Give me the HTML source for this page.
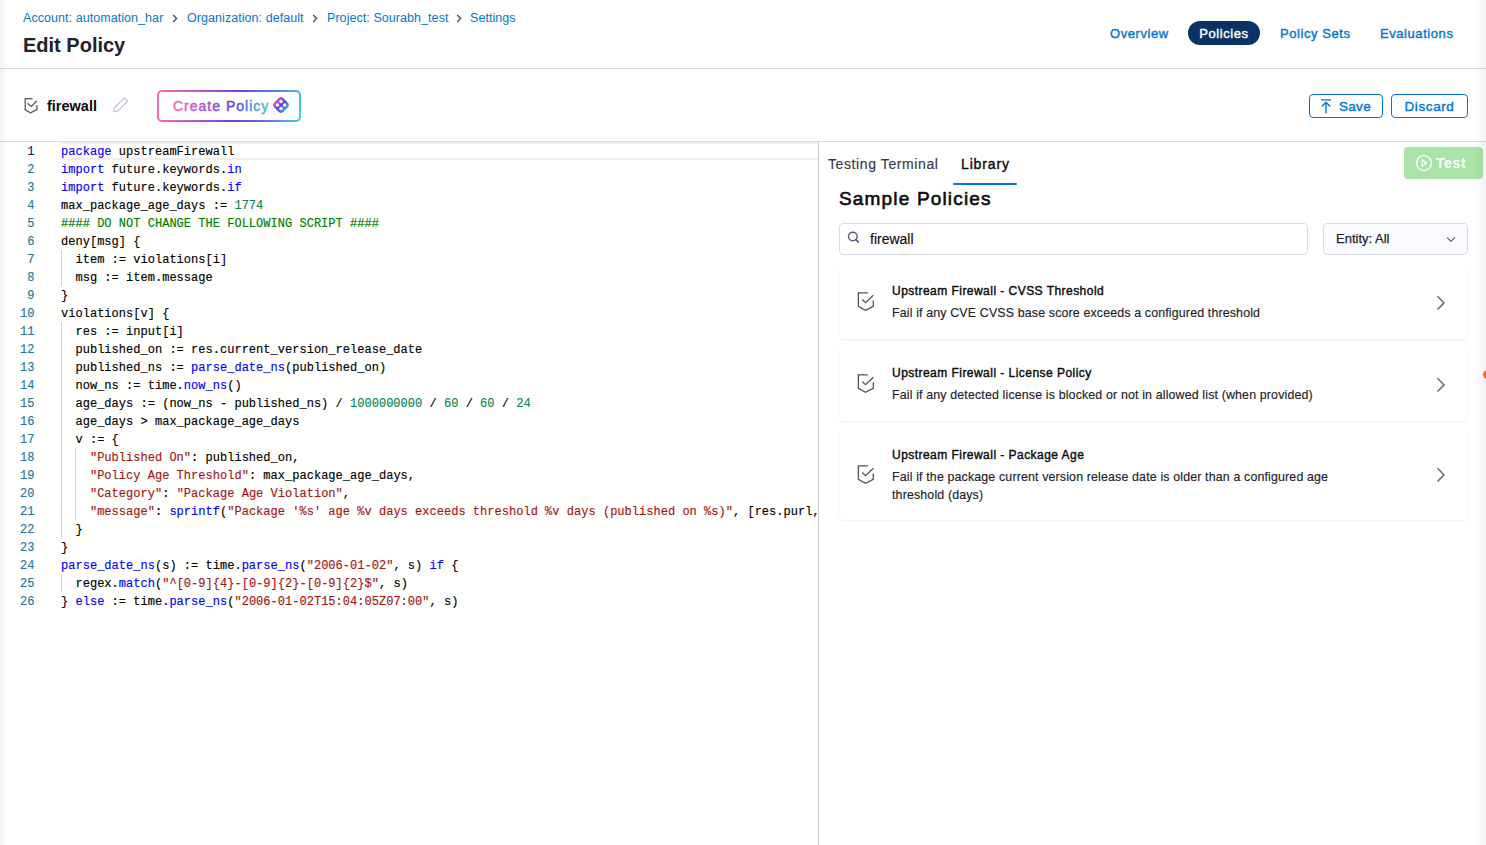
<!DOCTYPE html>
<html><head><meta charset="utf-8">
<style>
*{box-sizing:border-box;margin:0;padding:0}
html,body{width:1486px;height:845px;overflow:hidden;background:#fff}
body{position:relative;font-family:"Liberation Sans",sans-serif;color:#22222a}
.abs{position:absolute}
i{font-style:normal}
.shadowL{left:0;top:0;width:8px;height:845px;background:linear-gradient(90deg,rgba(0,0,0,0.05),rgba(0,0,0,0.025) 45%,rgba(0,0,0,0));z-index:50}
.shadowR{right:0;top:0;width:12px;height:845px;background:linear-gradient(90deg,rgba(0,0,0,0),rgba(0,0,0,0.02) 40%,rgba(0,0,0,0.055));z-index:50}
.bc{top:10px;left:0;font-size:12.5px;letter-spacing:0.06px;line-height:16px;color:#0278d5;white-space:nowrap}
.bc span{position:absolute;top:0;white-space:nowrap}
.bc svg{position:absolute;top:4px}
.title{top:33px;left:23px;font-size:20px;font-weight:700;line-height:24px;color:#22222a}
.hline1{left:0;top:68px;width:1486px;height:1px;background:#d9dae6}
.hline2{left:0;top:141px;width:1486px;height:1px;background:#d9dae6}
.nav{top:22px;font-size:13px;font-weight:400;-webkit-text-stroke:0.42px currentColor;letter-spacing:0.57px;line-height:24px;color:#0278d5;white-space:nowrap}
.pill{left:1188px;top:21px;padding-top:1px;width:72px;height:24px;border-radius:12px;background:#0a3364;color:#fff;text-align:center}
.btn{top:94px;height:24px;border:1px solid #0278d5;border-radius:4px;color:#0278d5;font-size:13px;font-weight:400;-webkit-text-stroke:0.42px currentColor;letter-spacing:0.3px;line-height:23.5px;white-space:nowrap}
.cp{left:157px;top:90px;width:144px;height:32px;border-radius:5px;background:linear-gradient(100deg,#f56ab0 0%,#b855d0 30%,#6a3ee0 55%,#5a7fe0 80%,#40d0e0 100%);padding:1.6px}
.cp div{width:100%;height:100%;background:#fff;border-radius:3px;position:relative}
.cpt{position:absolute;left:14px;top:5px;font-size:14px;font-weight:400;-webkit-text-stroke:0.45px transparent;line-height:18px;letter-spacing:0.6px;white-space:nowrap;background:linear-gradient(90deg,#ee6ab8 0%,#9b52d8 35%,#5a40de 60%,#4fa0dd 90%,#42c5e0 100%);-webkit-background-clip:text;background-clip:text;color:transparent}
/* editor */
.editor{left:0;top:142px;width:818px;height:703px;background:#fffffe;overflow:hidden}
.vsep{left:818px;top:142px;width:1px;height:703px;background:#cccccc}
.curline{position:absolute;left:61px;top:0;width:757px;height:18px;border-top:2px solid #eeeeee;border-bottom:2px solid #eeeeee}
.ln{position:absolute;left:0;height:18px;width:818px;font-family:"Liberation Mono",monospace;font-size:12px;line-height:18px;white-space:pre}
.ln b{position:absolute;top:1px;left:0;-webkit-text-stroke:0.15px currentColor;width:34.5px;text-align:right;font-weight:400;color:#237893}
.ln b.a{color:#0b216f}
.ln p{position:absolute;top:1px;left:61px;letter-spacing:0.024px;-webkit-text-stroke:0.15px currentColor;color:#000}
.k{color:#0000ff}.s{color:#a31515}.n{color:#098658}.c{color:#008000}
.guide{position:absolute;width:1px;background:#d3d3d3}
/* right panel */
.tab{top:155px;font-size:14px;line-height:18px;white-space:nowrap}
.tabline{left:953px;top:183px;width:64px;height:2px;background:#0278d5;border-radius:1px}
.testbtn{left:1404px;top:147px;width:79px;height:32px;border-radius:4px;background:#a9e3a5;color:#fff;font-size:14px;font-weight:700}
.h2{left:839px;top:188px;letter-spacing:1.17px;font-size:19px;font-weight:400;-webkit-text-stroke:0.6px currentColor;line-height:22px;color:#0b0b0d;white-space:nowrap}
.search{left:839px;top:223px;width:469px;height:32px;border:1px solid #d9dae6;border-radius:4px;background:#fff}
.dd{left:1323px;top:223px;width:145px;height:32px;border:1px solid #d9dae6;border-radius:4px;background:#fafbfe}
.card{left:840px;width:627px;background:#fff;border-radius:4px;box-shadow:0 1px 2px rgba(0,0,0,0.08),0 0 0.5px rgba(0,0,0,0.012)}
.ct{position:absolute;left:52px;letter-spacing:0.46px;font-size:12px;font-weight:400;-webkit-text-stroke:0.4px currentColor;line-height:16px;color:#0b0b0d;white-space:nowrap}
.cd{position:absolute;left:52px;letter-spacing:0.15px;margin-top:1px;-webkit-text-stroke:0.15px currentColor;font-size:12.4px;line-height:18px;color:#22222a;width:440px}
.cicon{position:absolute;left:17px}
.carrow{position:absolute;left:596px}
</style></head><body>
<div class="abs shadowL"></div>
<div class="abs shadowR"></div>

<!-- breadcrumb -->
<div class="abs bc">
<span style="left:23px">Account: automation_har</span>
<svg style="left:172px" width="6" height="9" viewBox="0 0 6 9"><path d="M1.2 1 L4.6 4.5 L1.2 8" fill="none" stroke="#4f5162" stroke-width="1.4"/></svg>
<span style="left:187px">Organization: default</span>
<svg style="left:312px" width="6" height="9" viewBox="0 0 6 9"><path d="M1.2 1 L4.6 4.5 L1.2 8" fill="none" stroke="#4f5162" stroke-width="1.4"/></svg>
<span style="left:327px">Project: Sourabh_test</span>
<svg style="left:456px" width="6" height="9" viewBox="0 0 6 9"><path d="M1.2 1 L4.6 4.5 L1.2 8" fill="none" stroke="#4f5162" stroke-width="1.4"/></svg>
<span style="left:470px">Settings</span>
</div>
<div class="abs title">Edit Policy</div>

<div class="abs nav" style="left:1110px">Overview</div>
<div class="abs nav pill">Policies</div>
<div class="abs nav" style="left:1280px">Policy Sets</div>
<div class="abs nav" style="left:1380px">Evaluations</div>

<div class="abs hline1"></div>

<!-- row 2 -->
<svg class="abs" style="left:24px;top:97px" width="14" height="18" viewBox="0 0 14 18"><path d="M8.6 1.7 H1.2 V12.9 L6.6 15.8 L12.9 12.6 V7.9 M3.6 6.3 L7.3 9.5 L12.7 4.0" fill="none" stroke="#4f5162" stroke-width="1.25"/></svg>
<div class="abs" style="left:47px;top:97px;font-size:14.5px;font-weight:700;line-height:18px;color:#0b0b0d">firewall</div>
<svg class="abs" style="left:111px;top:96px" width="18" height="19" viewBox="0 0 18 19"><g transform="rotate(45 9 9.5)"><path d="M7.6 0.8 h2.8 a0.9 0.9 0 0 1 0.9 0.9 V15.8 L9 18.2 L6.7 15.8 V1.7 a0.9 0.9 0 0 1 0.9 -0.9 Z" fill="none" stroke="#b5b6cb" stroke-width="1"/></g></svg>
<div class="abs cp"><div><svg style="position:absolute;left:0;top:0" width="140" height="29" viewBox="0 0 140 29"><defs><linearGradient id="tg" gradientUnits="userSpaceOnUse" x1="14" y1="0" x2="110" y2="0"><stop offset="0" stop-color="#ef6cb6"/><stop offset="0.4" stop-color="#9f52d6"/><stop offset="0.62" stop-color="#5c42dc"/><stop offset="0.85" stop-color="#4a9ade"/><stop offset="1" stop-color="#45c0e0"/></linearGradient></defs><text x="14" y="18.9" font-family="Liberation Sans" font-size="14" letter-spacing="1.0" fill="url(#tg)" stroke="url(#tg)" stroke-width="0.45">Create Policy</text></svg>
<svg style="position:absolute;left:113px;top:4.8px" width="18" height="18" viewBox="0 0 18 18"><defs><linearGradient id="ig" x1="0" y1="0" x2="1" y2="0"><stop offset="0" stop-color="#d552c0"/><stop offset="0.5" stop-color="#6a3ee0"/><stop offset="1" stop-color="#3a9ae0"/></linearGradient></defs><rect x="2.5" y="2.5" width="13" height="13" rx="3.6" transform="rotate(45 9 9)" fill="url(#ig)"/><circle cx="9" cy="5.4" r="1.75" fill="#fff"/><circle cx="9" cy="12.6" r="1.75" fill="#fff"/><circle cx="5.4" cy="9" r="1.75" fill="#fff"/><circle cx="12.6" cy="9" r="1.75" fill="#fff"/></svg>
</div></div>

<div class="abs btn" style="left:1309px;width:74px"><svg style="position:absolute;left:9px;top:4px" width="14" height="15" viewBox="0 0 14 15"><path d="M2 0.9 H12 M7 14.5 V3.5 M2.8 7.5 L7 3.2 L11.2 7.5" fill="none" stroke="#0278d5" stroke-width="1.35"/></svg><span style="position:absolute;left:29px;font-size:13.5px">Save</span></div>
<div class="abs btn" style="left:1391px;width:77px;text-align:center;font-size:13.5px;letter-spacing:0.6px">Discard</div>

<div class="abs hline2"></div>

<!-- editor -->
<div class="abs editor">
<div class="curline"></div>
<div class="guide" style="left:61px;top:108px;height:36px"></div>
<div class="guide" style="left:61px;top:180px;height:216px"></div>
<div class="guide" style="left:75px;top:306px;height:72px"></div>
<div class="guide" style="left:61px;top:432px;height:18px"></div>
<div class="ln" style="top:0px"><b class=a>1</b><p><i class="k">package</i> upstreamFirewall</p></div>
<div class="ln" style="top:18px"><b>2</b><p><i class="k">import</i> future.keywords.<i class="k">in</i></p></div>
<div class="ln" style="top:36px"><b>3</b><p><i class="k">import</i> future.keywords.<i class="k">if</i></p></div>
<div class="ln" style="top:54px"><b>4</b><p>max_package_age_days := <i class="n">1774</i></p></div>
<div class="ln" style="top:72px"><b>5</b><p><i class="c">#### DO NOT CHANGE THE FOLLOWING SCRIPT ####</i></p></div>
<div class="ln" style="top:90px"><b>6</b><p>deny[msg] {</p></div>
<div class="ln" style="top:108px"><b>7</b><p>  item := violations[i]</p></div>
<div class="ln" style="top:126px"><b>8</b><p>  msg := item.message</p></div>
<div class="ln" style="top:144px"><b>9</b><p>}</p></div>
<div class="ln" style="top:162px"><b>10</b><p>violations[v] {</p></div>
<div class="ln" style="top:180px"><b>11</b><p>  res := input[i]</p></div>
<div class="ln" style="top:198px"><b>12</b><p>  published_on := res.current_version_release_date</p></div>
<div class="ln" style="top:216px"><b>13</b><p>  published_ns := <i class="k">parse_date_ns</i>(published_on)</p></div>
<div class="ln" style="top:234px"><b>14</b><p>  now_ns := time.<i class="k">now_ns</i>()</p></div>
<div class="ln" style="top:252px"><b>15</b><p>  age_days := (now_ns - published_ns) / <i class="n">1000000000</i> / <i class="n">60</i> / <i class="n">60</i> / <i class="n">24</i></p></div>
<div class="ln" style="top:270px"><b>16</b><p>  age_days &gt; max_package_age_days</p></div>
<div class="ln" style="top:288px"><b>17</b><p>  v := {</p></div>
<div class="ln" style="top:306px"><b>18</b><p>    <i class="s">&quot;Published On&quot;</i>: published_on,</p></div>
<div class="ln" style="top:324px"><b>19</b><p>    <i class="s">&quot;Policy Age Threshold&quot;</i>: max_package_age_days,</p></div>
<div class="ln" style="top:342px"><b>20</b><p>    <i class="s">&quot;Category&quot;</i>: <i class="s">&quot;Package Age Violation&quot;</i>,</p></div>
<div class="ln" style="top:360px"><b>21</b><p>    <i class="s">&quot;message&quot;</i>: <i class="k">sprintf</i>(<i class="s">&quot;Package &#x27;%s&#x27; age %v days exceeds threshold %v days (published on %s)&quot;</i>, [res.purl, res.current_version, age_days, max_package_age_days, published_on])</p></div>
<div class="ln" style="top:378px"><b>22</b><p>  }</p></div>
<div class="ln" style="top:396px"><b>23</b><p>}</p></div>
<div class="ln" style="top:414px"><b>24</b><p><i class="k">parse_date_ns</i>(s) := time.<i class="k">parse_ns</i>(<i class="s">&quot;2006-01-02&quot;</i>, s) <i class="k">if</i> {</p></div>
<div class="ln" style="top:432px"><b>25</b><p>  regex.<i class="k">match</i>(<i class="s">&quot;^[0-9]{4}-[0-9]{2}-[0-9]{2}$&quot;</i>, s)</p></div>
<div class="ln" style="top:450px"><b>26</b><p>} <i class="k">else</i> := time.<i class="k">parse_ns</i>(<i class="s">&quot;2006-01-02T15:04:05Z07:00&quot;</i>, s)</p></div>
</div>
<div class="abs vsep"></div>

<!-- right panel -->
<div class="abs tab" style="left:828px;color:#383946;letter-spacing:0.6px;-webkit-text-stroke:0.15px currentColor">Testing Terminal</div>
<div class="abs tab" style="left:961px;color:#0b0b0d;font-weight:400;-webkit-text-stroke:0.38px currentColor;letter-spacing:0.85px">Library</div>
<div class="abs tabline"></div>
<div class="abs testbtn"><svg style="position:absolute;left:12px;top:8px" width="16" height="16" viewBox="0 0 16 16"><circle cx="8" cy="8" r="7.4" fill="none" stroke="#fff" stroke-width="1.3"/><path d="M6.2 4.9 V11.1 L10.6 8 Z" fill="none" stroke="#fff" stroke-width="1.3" stroke-linejoin="round"/></svg><span style="position:absolute;left:32px;top:7px;line-height:18px;letter-spacing:0.6px">Test</span></div>

<div class="abs h2">Sample Policies</div>

<div class="abs search"><svg style="position:absolute;left:7px;top:7px" width="14" height="14" viewBox="0 0 14 14"><circle cx="5.8" cy="5.5" r="4.3" fill="none" stroke="#5f6179" stroke-width="1.5"/><path d="M8.9 8.6 L11.2 10.9" stroke="#5f6179" stroke-width="1.9" stroke-linecap="round"/></svg><span style="position:absolute;left:30px;top:6px;font-size:14px;line-height:18px;color:#0b0b0d;-webkit-text-stroke:0.15px currentColor">firewall</span></div>
<div class="abs dd"><span style="position:absolute;left:12px;top:6px;font-size:13px;line-height:18px;color:#22222a;-webkit-text-stroke:0.25px currentColor">Entity: All</span><svg style="position:absolute;left:122px;top:12px" width="10" height="7" viewBox="0 0 10 7"><path d="M1 1.5 L5 5.3 L9 1.5" fill="none" stroke="#6b6d85" stroke-width="1.2"/></svg></div>

<div class="abs card" style="top:265px;height:74px">
<svg class="cicon" style="top:26px" width="18" height="21" viewBox="0 0 18 21"><path d="M10.8 1.8 H1.4 V15.4 L8.5 19.3 L16.3 15.4 V9.6 M5.3 8.5 L8.5 11.6 L16.4 4.2" fill="none" stroke="#4f5162" stroke-width="1.3"/></svg>
<div class="ct" style="top:18px">Upstream Firewall - CVSS Threshold</div>
<div class="cd" style="top:38px">Fail if any CVE CVSS base score exceeds a configured threshold</div>
<svg class="carrow" style="top:29.5px" width="10" height="16" viewBox="0 0 10 16"><path d="M1.5 1.3 L8 7.9 L1.5 14.5" fill="none" stroke="#6b6d85" stroke-width="1.6"/></svg>
</div>

<div class="abs card" style="top:346px;height:75px">
<svg class="cicon" style="top:27px" width="18" height="21" viewBox="0 0 18 21"><path d="M10.8 1.8 H1.4 V15.4 L8.5 19.3 L16.3 15.4 V9.6 M5.3 8.5 L8.5 11.6 L16.4 4.2" fill="none" stroke="#4f5162" stroke-width="1.3"/></svg>
<div class="ct" style="top:19px">Upstream Firewall - License Policy</div>
<div class="cd" style="top:39px">Fail if any detected license is blocked or not in allowed list (when provided)</div>
<svg class="carrow" style="top:30.5px" width="10" height="16" viewBox="0 0 10 16"><path d="M1.5 1.3 L8 7.9 L1.5 14.5" fill="none" stroke="#6b6d85" stroke-width="1.6"/></svg>
</div>

<div class="abs card" style="top:428px;height:92px">
<svg class="cicon" style="top:36px" width="18" height="21" viewBox="0 0 18 21"><path d="M10.8 1.8 H1.4 V15.4 L8.5 19.3 L16.3 15.4 V9.6 M5.3 8.5 L8.5 11.6 L16.4 4.2" fill="none" stroke="#4f5162" stroke-width="1.3"/></svg>
<div class="ct" style="top:19px">Upstream Firewall - Package Age</div>
<div class="cd" style="top:39px">Fail if the package current version release date is older than a configured age threshold (days)</div>
<svg class="carrow" style="top:39px" width="10" height="16" viewBox="0 0 10 16"><path d="M1.5 1.3 L8 7.9 L1.5 14.5" fill="none" stroke="#6b6d85" stroke-width="1.6"/></svg>
</div>

<div class="abs" style="left:1483px;top:369.5px;width:9.5px;height:9.5px;border-radius:50%;background:#ff6a33;z-index:60"></div>

</body></html>
